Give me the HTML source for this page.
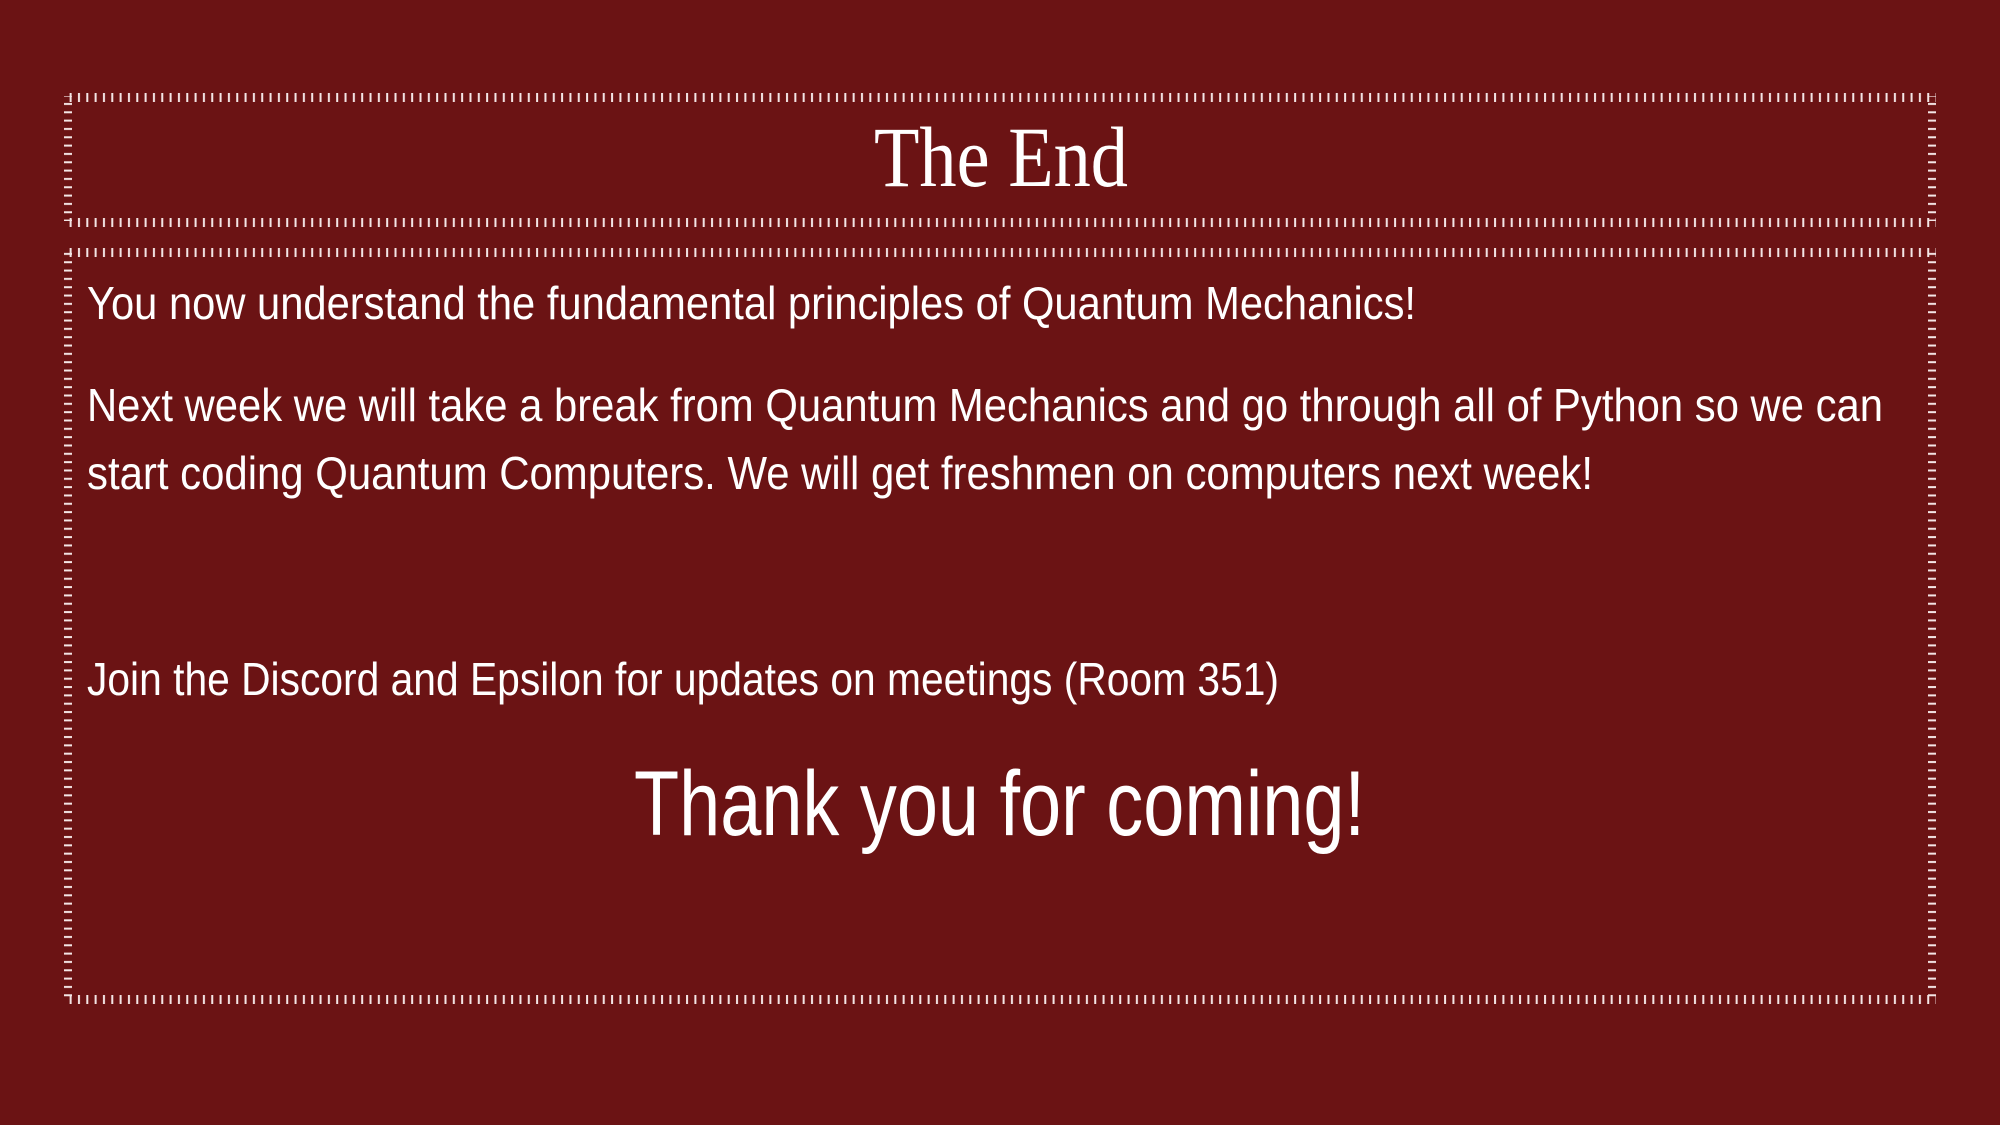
<!DOCTYPE html>
<html><head><meta charset="utf-8"><style>
html,body{margin:0;padding:0;background:#6b1314;width:2000px;height:1125px;overflow:hidden}
svg{display:block}
text{fill:#fff}
.b{font-family:"Liberation Sans",sans-serif;font-weight:300}
</style></head><body>
<svg width="2000" height="1125" viewBox="0 0 2000 1125" xmlns="http://www.w3.org/2000/svg">
<defs>
<pattern id="h" x="0" y="0" width="8.33" height="10" patternUnits="userSpaceOnUse"><rect x="3" y="0" width="2" height="10" fill="#f4e6e6"/></pattern>
<pattern id="v" x="0" y="0" width="10" height="8.33" patternUnits="userSpaceOnUse"><rect x="0" y="3" width="10" height="2" fill="#f4e6e6"/></pattern>
</defs>
<rect width="2000" height="1125" fill="#6b1314"/>
<!-- box 1 -->
<rect x="64" y="93" width="1872" height="9" fill="url(#h)"/>
<rect x="64" y="218" width="1872" height="9" fill="url(#h)"/>
<rect x="64" y="96" width="8" height="125" fill="url(#v)"/>
<rect x="1928" y="96" width="8" height="125" fill="url(#v)"/>
<!-- box 2 -->
<rect x="64" y="248" width="1872" height="9" fill="url(#h)"/>
<rect x="64" y="995" width="1872" height="9" fill="url(#h)"/>
<rect x="64" y="251" width="8" height="748" fill="url(#v)"/>
<rect x="1928" y="251" width="8" height="748" fill="url(#v)"/>

<text x="874" y="186" font-family="Liberation Serif, serif" font-size="86" textLength="254" lengthAdjust="spacingAndGlyphs">The End</text>
<text class="b" x="87" y="319" font-size="46" textLength="1329" lengthAdjust="spacingAndGlyphs">You now understand the fundamental principles of Quantum Mechanics!</text>
<text class="b" x="87" y="421" font-size="46" textLength="1796" lengthAdjust="spacingAndGlyphs">Next week we will take a break from Quantum Mechanics and go through all of Python so we can</text>
<text class="b" x="87" y="489" font-size="46" textLength="1506" lengthAdjust="spacingAndGlyphs">start coding Quantum Computers. We will get freshmen on computers next week!</text>
<text class="b" x="87" y="695" font-size="46" textLength="1192" lengthAdjust="spacingAndGlyphs">Join the Discord and Epsilon for updates on meetings (Room 351)</text>
<text class="b" x="634" y="835" font-size="92" textLength="731" lengthAdjust="spacingAndGlyphs">Thank you for coming!</text>
</svg>
</body></html>
